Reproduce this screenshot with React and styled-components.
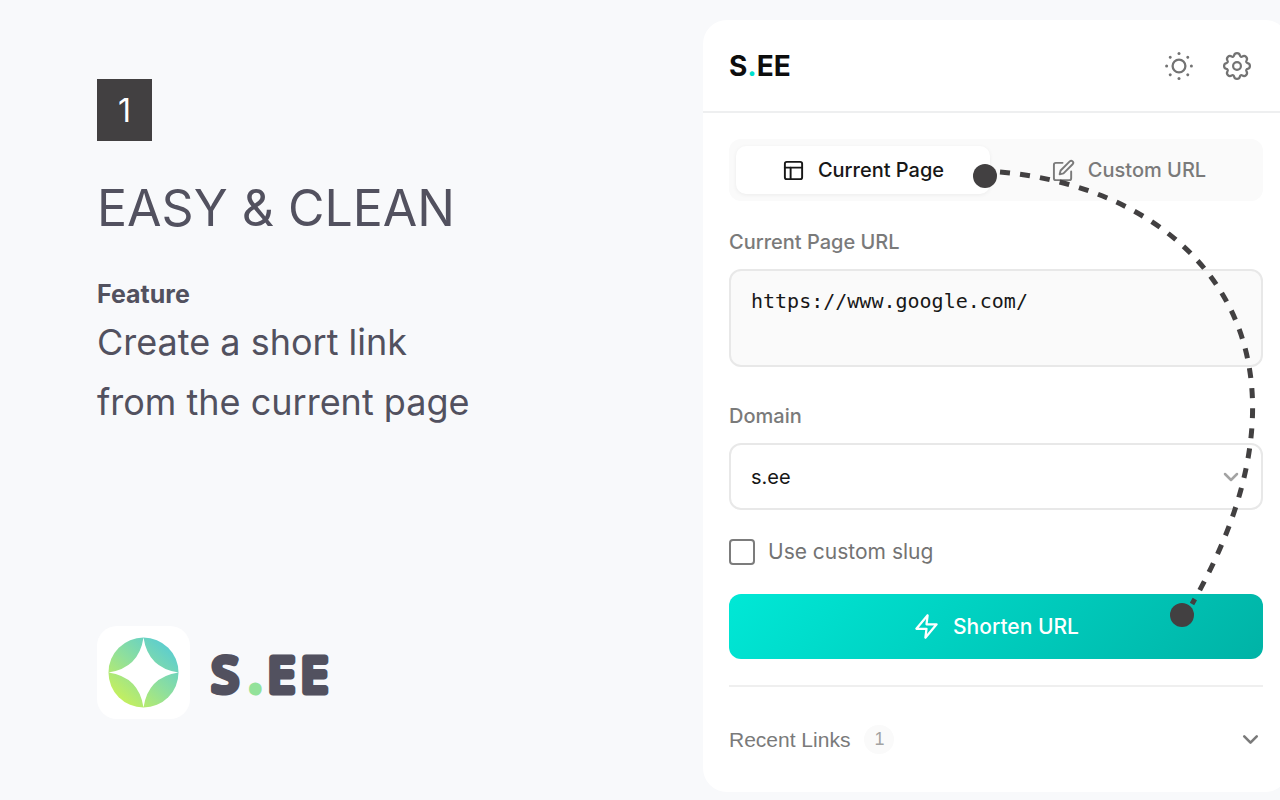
import styled, { createGlobalStyle } from 'styled-components';
import { FiChevronDown, FiEdit, FiLayout, FiZap } from 'react-icons/fi';

const GlobalStyle = createGlobalStyle`
    *, *::before, *::after {
        box-sizing: border-box;
    }

    body {
        margin: 0;
        background: #f8f9fb;
        font-family: Inter, "Liberation Sans", sans-serif;
    }

    button, input, select, textarea {
        font: inherit;
        margin: 0;
    }
`;

const Page = styled.main`
    display: grid;
    grid-template-columns: minmax(0, 1fr) calc(45% + 1px);
    min-height: 100vh;
    padding: 20px 0 8px;
    overflow: hidden;
`;

const Intro = styled.section`
    display: flex;
    flex-direction: column;
    align-items: flex-start;
    padding: 59px 40px 73px 97px;
    color: #52515f;
`;

const Step = styled.span`
    display: flex;
    align-items: center;
    justify-content: center;
    width: 55px;
    height: 62px;
    background: #424041;
    color: #fff;
    font-size: 32px;
    font-weight: 400;
`;

const Title = styled.h1`
    margin: 36px 0 0;
    font-size: 50px;
    font-weight: 400;
    line-height: 62px;
`;

const Kicker = styled.h2`
    margin: 40px 0 0;
    font-size: 25px;
    font-weight: 700;
    line-height: 30px;
`;

const Lead = styled.p`
    margin: 3px 0 0;
    font-size: 36px;
    font-weight: 400;
    line-height: 60px;
`;

const Brand = styled.div`
    display: flex;
    align-items: center;
    gap: 16px;
    margin-top: auto;
`;

const BrandTile = styled.div`
    display: flex;
    align-items: center;
    justify-content: center;
    width: 93px;
    height: 93px;
    border-radius: 20px;
    background: #fff;
`;

const Card = styled.section`
    position: relative;
    display: flex;
    flex-direction: column;
    margin-right: -9px;
    border-radius: 24px;
    background: #fff;
    color: #737373;
`;

const CardHeader = styled.header`
    display: flex;
    align-items: center;
    justify-content: space-between;
    height: 93px;
    padding: 0 33px 0 26px;
    border-bottom: 2px solid #eeeff0;
`;

const Wordmark = styled.strong`
    color: #0d0d0d;
    font-size: 28px;
    font-weight: 700;
`;

const Dot = styled.span`
    color: #00e0cc;
`;

const HeaderActions = styled.div`
    display: flex;
    gap: 20px;
`;

const IconButton = styled.button`
    display: flex;
    align-items: center;
    justify-content: center;
    width: 38px;
    height: 38px;
    padding: 0;
    border: 0;
    background: none;
    color: #737373;
`;

const CardBody = styled.div`
    display: flex;
    flex-direction: column;
    padding: 26px 26px 0;
`;

const Tabs = styled.div`
    display: grid;
    grid-template-columns: 1fr 1fr;
    gap: 12px;
    padding: 7px;
    border-radius: 12px;
    background: #fafafa;
`;

const Tab = styled.button`
    display: flex;
    align-items: center;
    justify-content: center;
    gap: 13px;
    height: 48px;
    padding: 0;
    border: 0;
    border-radius: 10px;
    background: ${props => props.$active ? '#fff' : 'transparent'};
    box-shadow: ${props => props.$active ? '0 1px 4px rgba(0, 0, 0, 0.06)' : 'none'};
    color: ${props => props.$active ? '#171717' : '#7a7a7a'};
    font-size: 20px;
    font-weight: 500;
`;

const Label = styled.label`
    margin-top: ${props => props.$top};
    color: #7a7a7a;
    font-size: 20px;
    font-weight: 500;
    line-height: 24px;
`;

const UrlBox = styled.textarea`
    height: 98px;
    margin-top: 15px;
    padding: 16px 20px;
    border: 2px solid #e8e8e8;
    border-radius: 12px;
    outline: none;
    background: #fafafa;
    color: #171717;
    font-family: "DejaVu Sans Mono", monospace;
    font-size: 20px;
    line-height: 28px;
    resize: none;
`;

const SelectWrap = styled.div`
    position: relative;
    margin-top: 15px;

    svg {
        position: absolute;
        top: 22px;
        right: 20px;
        color: #a3a3a3;
        pointer-events: none;
    }
`;

const Select = styled.select`
    display: block;
    width: 100%;
    height: 67px;
    padding: 0 20px;
    border: 2px solid #e8e8e8;
    border-radius: 12px;
    appearance: none;
    background: #fff;
    color: #171717;
    font-size: 20px;
`;

const CheckRow = styled.label`
    display: flex;
    align-items: center;
    gap: 13px;
    margin-top: 28px;
    font-size: 21px;
    line-height: 28px;
`;

const CheckBox = styled.input`
    width: 26px;
    height: 26px;
    border: 2px solid #7c7c7c;
    border-radius: 4px;
    appearance: none;
    background: #fff;
`;

const Submit = styled.button`
    display: flex;
    align-items: center;
    justify-content: center;
    gap: 13px;
    height: 65px;
    margin-top: 28px;
    padding: 0;
    border: 0;
    border-radius: 12px;
    background: linear-gradient(135deg, #00e8d6 0%, #00b3a6 100%);
    color: #fff;
    font-size: 21px;
    font-weight: 500;
`;

const Recent = styled.button`
    display: flex;
    align-items: center;
    height: 107px;
    margin-top: 26px;
    padding: 0;
    border: 0;
    border-top: 2px solid #efefef;
    background: none;
    color: #7a7a7a;
    font-family: "Liberation Sans", Arial, sans-serif;
    font-size: 21px;

    svg {
        margin-left: auto;
    }
`;

const Count = styled.span`
    margin-left: 14px;
    padding: 0 10px;
    border-radius: 15px;
    background: #fafafa;
    color: #a3a3a3;
    font-size: 18px;
    line-height: 29px;
`;

const Connector = styled.svg`
    position: absolute;
    inset: 0;
    width: 100%;
    height: 100%;
    pointer-events: none;
`;

function BrandMark() {
    return (
        <svg width="71" height="71" viewBox="-35.500 -35.500 71 71" aria-hidden="true">
            <defs>
                <linearGradient id="leaf" x1="0.15" y1="0.9" x2="0.85" y2="0.1">
                    <stop offset="0" stopColor="#c6f05c" />
                    <stop offset="0.5" stopColor="#8edf9d" />
                    <stop offset="1" stopColor="#5bcdd0" />
                </linearGradient>
            </defs>
            <circle r="35" fill="url(#leaf)" />
            <path d="M0-35Q4.500-4.500 35 0Q4.500 4.500 0 35Q-4.500 4.500-35 0Q-4.500-4.500 0-35Z" fill="#fff" />
        </svg>
    );
}

// the thick round stroke is what gives the letters their soft corners
function BrandName() {
    return (
        <svg
            width="136"
            height="92"
            viewBox="0 -16 136 92"
            fontFamily="Open Sans, sans-serif"
            fontWeight="400"
            fontSize="48"
            strokeLinejoin="round"
            strokeWidth="7"
        >
            <text y="49" fill="#52515f" stroke="#52515f">
                <tspan x="6">S</tspan>
                <tspan x="43" fill="#93e29a" stroke="#93e29a">.</tspan>
                <tspan x="62">E</tspan>
                <tspan x="95">E</tspan>
            </text>
        </svg>
    );
}

const TURNS = [0, 45, 90, 135, 180, 225, 270, 315];

function SunIcon() {
    return (
        <svg width="30" height="30" viewBox="-15 -15 30 30" aria-hidden="true">
            <circle r="6.400" fill="none" stroke="currentColor" strokeWidth="2.300" />
            {TURNS.map(angle => (
                <circle key={angle} cx="12.400" r="1.500" fill="currentColor" transform={`rotate(${angle})`} />
            ))}
        </svg>
    );
}

function GearIcon() {
    const at = degrees => {
        const angle = degrees * Math.PI / 180;
        return `${(10.92 * Math.cos(angle)).toFixed(2)} ${(10.92 * Math.sin(angle)).toFixed(2)}`;
    };
    const teeth = TURNS.map(angle => `A3 3 0 0 1 ${at(angle + 15.6)}A1.5 1.5 0 0 0 ${at(angle + 29.4)}`);

    return (
        <svg
            width="30"
            height="30"
            viewBox="-15 -15 30 30"
            fill="none"
            stroke="currentColor"
            strokeWidth="2.200"
            aria-hidden="true"
        >
            <path d={`M${at(-15.6)}${teeth.join('')}Z`} />
            <circle r="3.900" />
        </svg>
    );
}

export default function App() {
    return (
        <>
            <GlobalStyle />
            <Page>
                <Intro>
                    <Step>1</Step>
                    <Title>EASY &amp; CLEAN</Title>
                    <Kicker>Feature</Kicker>
                    <Lead>
                        Create a short link
                        <br />
                        from the current page
                    </Lead>
                    <Brand>
                        <BrandTile>
                            <BrandMark />
                        </BrandTile>
                        <BrandName />
                    </Brand>
                </Intro>

                <Card>
                    <CardHeader>
                        <Wordmark>S<Dot>.</Dot>EE</Wordmark>
                        <HeaderActions>
                            <IconButton aria-label="Theme">
                                <SunIcon />
                            </IconButton>
                            <IconButton aria-label="Settings">
                                <GearIcon />
                            </IconButton>
                        </HeaderActions>
                    </CardHeader>

                    <CardBody>
                        <Tabs>
                            <Tab $active>
                                <FiLayout size={23} />
                                Current Page
                            </Tab>
                            <Tab>
                                <FiEdit size={23} />
                                Custom URL
                            </Tab>
                        </Tabs>

                        <Label htmlFor="url" $top="29px">Current Page URL</Label>
                        <UrlBox id="url" readOnly value="https://www.google.com/" />

                        <Label htmlFor="domain" $top="37px">Domain</Label>
                        <SelectWrap>
                            <Select id="domain">
                                <option>s.ee</option>
                            </Select>
                            <FiChevronDown size={24} strokeWidth={2.5} />
                        </SelectWrap>

                        <CheckRow>
                            <CheckBox type="checkbox" />
                            Use custom slug
                        </CheckRow>

                        <Submit>
                            <FiZap size={27} />
                            Shorten URL
                        </Submit>

                        <Recent>
                            Recent Links
                            <Count>1</Count>
                            <FiChevronDown size={25} strokeWidth={2.5} />
                        </Recent>
                    </CardBody>

                    <Connector viewBox="0 0 586 772" fill="none" aria-hidden="true">
                        <path
                            d="M297 152C491 169 637 325 489 584"
                            stroke="#424041"
                            strokeWidth="5"
                            strokeDasharray="10 10.150"
                        />
                        <circle cx="282" cy="156" r="12" fill="#424041" />
                        <circle cx="479" cy="595" r="12" fill="#424041" />
                    </Connector>
                </Card>
            </Page>
        </>
    );
}
